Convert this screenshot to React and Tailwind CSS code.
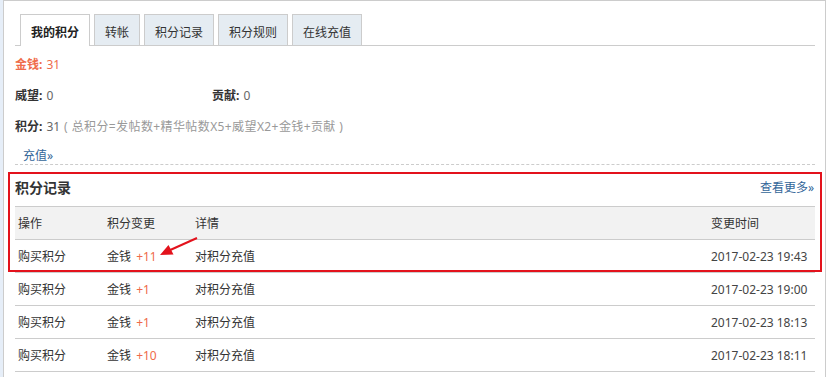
import React from "react";

const tabs = ["我的积分", "转帐", "积分记录", "积分规则", "在线充值"];

const rows = [
  { op: "购买积分", amount: "+11", detail: "对积分充值", time: "2017-02-23 19:43" },
  { op: "购买积分", amount: "+1", detail: "对积分充值", time: "2017-02-23 19:00" },
  { op: "购买积分", amount: "+1", detail: "对积分充值", time: "2017-02-23 18:13" },
  { op: "购买积分", amount: "+10", detail: "对积分充值", time: "2017-02-23 18:11" },
];

export default function App() {
  return (
    <div
      className="relative flex min-h-[377px] h-[377px] overflow-hidden bg-white pr-[1px] text-[12px] text-[#333]"
      style={{ fontFamily: '"Noto Sans", "Noto Sans CJK SC", sans-serif' }}
    >
      {/* left strip of the outer page */}
      <div className="w-[3px] shrink-0 bg-[#e6eef8]" />

      <div className="flex-1 border-l border-t border-r border-[#cccccc] pl-[11px] pr-[10px] pt-[13px]">
        {/* Tabs */}
        <div className="flex h-[32px] items-end gap-[4px] border-b border-[#cccccc] pl-[5px]">
          {tabs.map((t, i) =>
            i === 0 ? (
              <div
                key={t}
                className="-mb-px flex h-[32px] items-center border border-b-0 border-[#cccccc] bg-white px-[10px] pt-[5px] font-bold text-[#222]"
              >
                {t}
              </div>
            ) : (
              <div
                key={t}
                className="flex h-[31px] items-center border border-b-0 border-[#cccccc] bg-[#e5ecf2] px-[10px] pt-[5px] text-[#333]"
              >
                {t}
              </div>
            )
          )}
        </div>

        {/* Summary */}
        <div className="mt-[3px]">
          <div className="flex h-[31px] items-center pt-[1px] text-[#ef6b4a]">
            <b>金钱:</b>
            <span className="ml-[4px]">31</span>
          </div>
          <div className="flex h-[31px] items-center pt-[1px]">
            <div className="w-[197px]">
              <b className="text-[#333]">威望:</b>
              <span className="ml-[4px] text-[#666]">0</span>
            </div>
            <div>
              <b className="text-[#333]">贡献:</b>
              <span className="ml-[4px] text-[#666]">0</span>
            </div>
          </div>
          <div className="flex h-[31px] items-center pt-[1px]">
            <b className="text-[#333]">积分:</b>
            <span className="ml-[4px] text-[#666]">31</span>
            <span className="ml-[4px] tracking-[0.4px] text-[#999]">( 总积分=发帖数+精华帖数X5+威望X2+金钱+贡献 )</span>
          </div>
          <div className="h-[23px] border-b border-dashed border-[#cccccc] pl-[8px] pt-[6px] leading-[16px]">
            <span className="text-[#336699]">充值»</span>
          </div>
        </div>

        {/* Records */}
        <div className="flex h-[41px] items-center justify-between pt-[4px]">
          <span className="text-[14px] font-bold text-[#333]">积分记录</span>
          <span className="pr-[1px] text-[#336699]">查看更多»</span>
        </div>

        <div className="grid h-[34px] grid-cols-[89px_88px_1fr_107px] items-center border-t border-b border-[#cccccc] bg-[#f2f2f2] pt-[2px]">
          <div className="pl-[3px]">操作</div>
          <div className="pl-[3px]">积分变更</div>
          <div className="pl-[3px]">详情</div>
          <div className="pl-[3px]">变更时间</div>
        </div>
        {rows.map((r, i) => (
          <div
            key={i}
            className="grid h-[33px] grid-cols-[89px_88px_1fr_107px] items-center border-b border-[#cccccc] pt-[2px]"
          >
            <div className="pl-[3px]">{r.op}</div>
            <div className="pl-[3px]">
              金钱 <span className="ml-[2px] text-[#ef6b4a]">{r.amount}</span>
            </div>
            <div className="pl-[3px]">{r.detail}</div>
            <div className="pl-[3px] text-[#444]">{r.time}</div>
          </div>
        ))}
      </div>

      {/* red annotation box */}
      <div className="pointer-events-none absolute left-[8px] top-[172px] h-[100px] w-[814px] border-2 border-[#e3121c]" />

      {/* red annotation arrow */}
      <svg
        className="pointer-events-none absolute left-0 top-0"
        width="827"
        height="377"
        viewBox="0 0 827 377"
      >
        <line x1="197" y1="238" x2="168" y2="251" stroke="#e3121c" strokeWidth="2" />
        <polygon points="160,255 173.5,254.5 168.5,245" fill="#e3121c" />
      </svg>
    </div>
  );
}
